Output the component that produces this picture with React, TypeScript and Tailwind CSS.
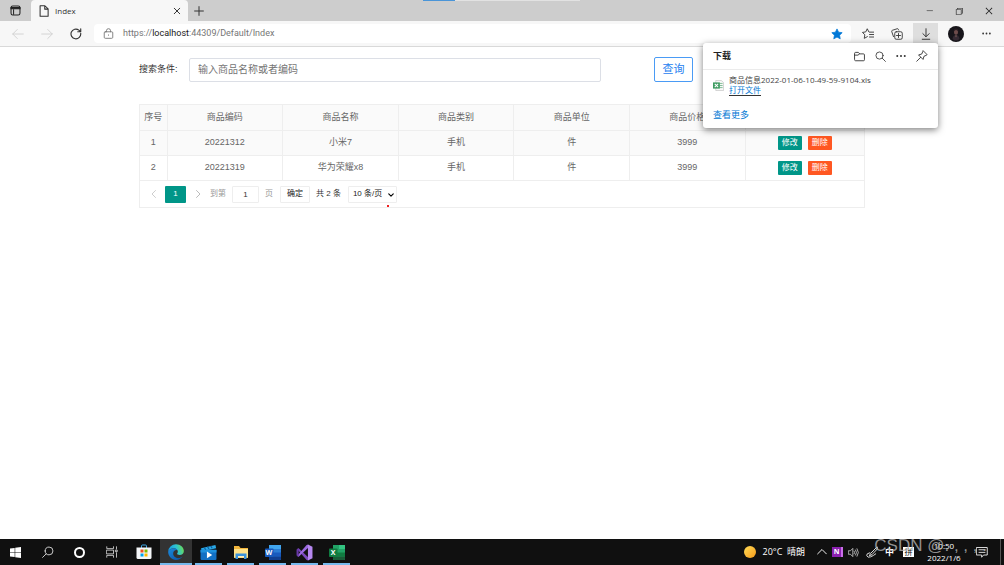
import React from "react";
import {
  VscChromeMinimize,
  VscChromeRestore,
  VscChromeClose,
} from "react-icons/vsc";

type IconProps = { className?: string };
type Product = { code: string; name: string; category: string; unit: string; price: string };

const products: Product[] = [
  { code: "20221312", name: "小米7", category: "手机", unit: "件", price: "3999" },
  { code: "20221319", name: "华为荣耀x8", category: "手机", unit: "件", price: "3999" },
];

const headings = ["序号", "商品编码", "商品名称", "商品类别", "商品单位", "商品价格", "操作"];

function Line({ className, children, box = "0 0 16 16", w = 1.2 }: IconProps & { children: React.ReactNode; box?: string; w?: number }) {
  return (
    <svg className={className} viewBox={box} fill="none" stroke="currentColor" strokeWidth={w} strokeLinecap="round" strokeLinejoin="round" aria-hidden="true">
      {children}
    </svg>
  );
}

const Dots = ({ className }: IconProps) => (
  <svg className={className} viewBox="0 0 16 16" fill="currentColor" aria-hidden="true">
    <circle cx="2" cy="8" r="1.6" />
    <circle cx="8" cy="8" r="1.6" />
    <circle cx="14" cy="8" r="1.6" />
  </svg>
);

const SearchIcon = ({ className }: IconProps) => (
  <Line className={className}>
    <circle cx="6.6" cy="6.6" r="5.2" />
    <path d="M10.500 10.500 15.200 15.200" />
  </Line>
);

function TabStrip() {
  return (
    <div className="relative flex h-[21px] bg-[#cdcdcd]">
      <button aria-label="标签页操作" className="flex w-[31px] items-center justify-center text-[#222]">
        <svg className="size-[11px]" viewBox="0 0 16 16" fill="none" stroke="currentColor" strokeWidth="1.5" aria-hidden="true">
          <rect x="1.5" y="1.5" width="13" height="13" rx="2.5" />
          <path d="M1.5 3.5h13v2h-13z" fill="currentColor" />
          <path d="M5.2 6v8" />
        </svg>
      </button>
      <div className="flex w-[157px] items-center rounded-t bg-[#f7f7f7] pr-[7px] pl-[7px]">
        <Line className="size-3 text-[#333]" w={1.4}>
          <path d="M2.8 1h6.4l4.3 4.3V15H2.8zM9 1v4.5h4.5" />
        </Line>
        <span className="ml-1 flex-1 pl-px text-[8px] text-[#333]">Index</span>
        <button aria-label="关闭标签页" className="text-[#222]">
          <Line className="size-2" w={1.8}>
            <path d="m2.5 2.5 11 11m0-11-11 11" />
          </Line>
        </button>
      </div>
      <button aria-label="新建标签页" className="flex w-[22px] items-center justify-center text-[#333]">
        <Line className="size-[10px]" w={1.6}>
          <path d="M8 1v14M1 8h14" />
        </Line>
      </button>
      <div className="absolute top-0 left-[42.1%] flex h-px w-[157px]">
        <span className="w-[32px] bg-[#4a95d8]" />
        <span className="flex-1 bg-[#e2e2e2]" />
      </div>
      <div className="ml-auto flex text-[#222]">
        <button aria-label="最小化" className="flex w-[30px] items-center justify-center"><VscChromeMinimize className="size-[9px]" /></button>
        <button aria-label="还原" className="flex w-[30px] items-center justify-center"><VscChromeRestore className="size-[10px]" /></button>
        <button aria-label="关闭" className="flex w-[30px] items-center justify-center"><VscChromeClose className="size-[10px]" /></button>
      </div>
    </div>
  );
}

function Toolbar() {
  return (
    <div className="flex h-[26px] items-center border-b border-[#d9d9d9] bg-[#f7f7f7] text-[#333]">
      <div className="flex w-[94px] items-center gap-[17px] pl-3">
        <button aria-label="后退" className="text-[#cfcfcf]"><Line className="size-3"><path d="M15 8H1m6-6L1 8l6 6" /></Line></button>
        <button aria-label="前进" className="text-[#cfcfcf]"><Line className="size-3"><path d="M1 8h14M9 2l6 6-6 6" /></Line></button>
        <button aria-label="刷新">
          <Line className="size-3" w={1.5}><path d="M14.3 7.2A6.5 6.5 0 1 1 11.8 2.8L14 4.6M14.3 1v4h-4" /></Line>
        </button>
      </div>
      <div className="flex h-[19px] flex-1 items-center rounded-sm bg-white px-2">
        <Line className="ml-px size-[11px] text-[#777]" w={1.3}>
          <rect x="1.8" y="5.5" width="12.4" height="9.5" rx="1.5" />
          <path d="M5 5.5V4a3 3 0 0 1 6 0v1.5M8 10v.6" />
        </Line>
        <a href="https://localhost:44309/Default/Index" className="ml-[9px] flex-1 font-['Roboto',sans-serif] text-[9px] text-[#767676]">
          https://<span className="text-[#1a1a1a]">localhost</span>:44309/Default/Index
        </a>
        <button aria-label="收藏此页" className="text-[#0078d7]">
          <svg className="size-3" viewBox="0 0 16 16" fill="currentColor" stroke="currentColor" strokeLinejoin="round" aria-hidden="true"><path d="m8 1.200 2.100 4.400 4.800.6-3.500 3.400.9 4.800L8 12.100l-4.300 2.300.9-4.800L1.100 6.200l4.800-.6z" /></svg>
        </button>
      </div>
      <div className="flex h-full items-center pl-0.5">
        <button aria-label="收藏夹" className="flex w-[29px] justify-center">
          <Line className="size-3" w={1.2}><path d="M9 5 7 1 5 5.200l-4.400.7L3.800 9 3 13.800l4.200-2.300M10 5.500h5.500M10 8.700h5.500M10 12h5.500" /></Line>
        </button>
        <button aria-label="集锦" className="flex w-[29px] justify-center">
          <Line className="size-3" w={1.2}>
            <rect x="5" y="5" width="10" height="10" rx="2" />
            <path d="M10 7.3v5.4M7.3 10h5.4M3.3 11.5 1 4.8Q.6 3.4 2 3L8.2 1Q9.5.6 10 2l.3.8" />
          </Line>
        </button>
        <button aria-label="下载" className="mt-0.5 ml-0.5 flex h-[21px] w-[25px] items-center justify-center self-start bg-[#dedede]">
          <Line className="size-3" w={1.3}><path d="M8 1v10.5M3.8 7.5 8 11.7l4.2-4.2M3 15h10" /></Line>
        </button>
        <button aria-label="个人资料" className="flex w-9 justify-center">
          <svg className="size-4" viewBox="0 0 32 32" aria-hidden="true">
            <circle cx="16" cy="16" r="16" fill="#17151a" />
            <ellipse cx="16" cy="12" rx="4" ry="5.5" fill="#6d4c4b" />
            <path d="M11 12q0-7 5-7t5 7q-2-4-5-4t-5 4" fill="#2a1f24" />
            <path d="M9 26q1-8 7-8t7 8l-4 3h-6z" fill="#352a33" />
            <path d="m14 19 2 4 2-4z" fill="#805d59" />
          </svg>
        </button>
        <button aria-label="设置及其他" className="flex w-6 justify-center"><Dots className="size-[9px]" /></button>
        <span className="w-1.5" />
      </div>
    </div>
  );
}

function DownloadsPanel() {
  return (
    <section aria-label="下载" className="absolute top-[43px] right-[66px] w-[235px] rounded-[3px] bg-white pb-[7px] text-[#333] shadow-[0_2px_7px_rgba(0,0,0,0.5)]">
      <header className="flex h-[27px] items-center border-b border-[#ebebeb] pr-[10px] pl-[10px]">
        <h2 className="flex-1 text-[9px] font-bold text-[#222]">下载</h2>
        <div className="flex items-center gap-[10px]">
          <button aria-label="打开下载文件夹">
            <Line className="size-[11px]" w={1.3}><path d="M.8 3.5q0-1.5 1.5-1.5h4l2 2.2h5.4q1.5 0 1.5 1.5v7q0 1.5-1.5 1.5H2.3q-1.5 0-1.5-1.5zM.8 6h5l2.3-1.8" /></Line>
          </button>
          <button aria-label="搜索下载"><SearchIcon className="size-[11px]" /></button>
          <button aria-label="更多选项"><Dots className="size-[10px]" /></button>
          <button aria-label="固定">
            <Line className="size-3" w={1.2}><path d="m9.8 1.2 5 5-1.5 1-2.7 1.2-1.2 4.2L3.4 6.6l4.2-1.2 1.2-2.7zM6.2 9.8 1 15" /></Line>
          </button>
        </div>
      </header>
      <div className="flex items-center px-[10px] pt-1">
        <svg className="size-[11px]" viewBox="0 0 16 16" aria-hidden="true">
          <path d="M4 .7h8l3.3 3v11.6H4z" fill="#f8f8f8" stroke="#b6b6b6" strokeWidth=".8" />
          <path d="M10 5h4M10 8h4M10 11h4" stroke="#77b98f" strokeWidth="1.3" />
          <path d="M0 3.5h10v9H0z" fill="#3d9b60" />
          <path d="m2.5 5.5 5 5m0-5-5 5" stroke="#fff" strokeWidth="1.5" />
        </svg>
        <div className="ml-[5px] flex flex-col items-start">
          <span className="text-[8px] leading-[11px] text-[#444]">商品信息2022-01-06-10-49-59-9104.xls</span>
          <a href="#open" className="border-b border-[#333] text-[8px] leading-[10px] text-[#0078d4]">打开文件</a>
        </div>
      </div>
      <a href="#more" className="mt-[13px] ml-[10px] block w-fit text-[9px] leading-3 text-[#0078d4]">查看更多</a>
    </section>
  );
}

function ProductTable() {
  return (
    <table className="mt-[22px] w-full table-fixed border-collapse text-center text-[9px] text-[#666]">
      <colgroup>
        <col className="w-[3.8%]" />
        <col className="w-[15.95%]" />
        <col className="w-[15.95%]" />
        <col className="w-[15.95%]" />
        <col className="w-[15.95%]" />
        <col className="w-[15.95%]" />
        <col />
      </colgroup>
      <thead>
        <tr className="h-[26px] bg-[#fafafa]">
          {headings.map((h) => (
            <th key={h} scope="col" className="border border-[#eeeeee] font-normal">{h}</th>
          ))}
        </tr>
      </thead>
      <tbody>
        {products.map((p, i) => (
          <tr key={p.code} className="h-[25px] odd:bg-[#fafafa]">
            {[String(i + 1), p.code, p.name, p.category, p.unit, p.price].map((v, c) => (
              <td key={c} className="border border-[#eeeeee]">{v}</td>
            ))}
            <td className="border border-[#eeeeee]">
              <div className="flex justify-center gap-1.5 text-[8px] text-white">
                <button className="h-[14px] w-6 rounded-[1px] bg-[#009688]">修改</button>
                <button className="h-[14px] w-6 rounded-[1px] bg-[#ff5722]">删除</button>
              </div>
            </td>
          </tr>
        ))}
      </tbody>
    </table>
  );
}

function Pager() {
  return (
    <nav aria-label="分页" className="flex h-[27px] items-center border border-t-0 border-[#eeeeee] text-[8px] text-[#333]">
      <button aria-label="上一页" className="flex w-[25px] justify-center pl-0.5 text-[#c2c2c2]"><Line className="size-2" w={1.6}><path d="M11 1 4 8l7 7" /></Line></button>
      <button aria-current="page" className="h-[17px] w-[21px] rounded-[1px] bg-[#009688] text-white">1</button>
      <button aria-label="下一页" className="flex w-6 justify-center text-[#aaa]"><Line className="size-2" w={1.6}><path d="m5 1 7 7-7 7" /></Line></button>
      <label htmlFor="page" className="text-[#999]">到第</label>
      <input id="page" defaultValue="1" className="mx-1.5 h-[17px] w-[27px] rounded-[1px] border border-[#eeeeee] text-center" />
      <span className="text-[#999]">页</span>
      <button className="ml-[7px] h-[17px] w-[30px] rounded-[1px] border border-[#eeeeee] text-[#222]">确定</button>
      <span className="ml-1.5">共 2 条</span>
      <div className="relative ml-[7px]">
        <select aria-label="每页条数" defaultValue="10" className="h-[17px] w-[49px] appearance-none rounded-[1px] border border-[#eeeeee] bg-white pl-1 text-[8px] text-[#222]">
          <option value="10">10 条/页</option>
          <option value="20">20 条/页</option>
        </select>
        <Line className="pointer-events-none absolute top-1.5 right-[3px] size-1.5 text-black" w={3}><path d="m2 5 6 6 6-6" /></Line>
        <span className="absolute right-2 -bottom-1 size-0.5 bg-[#f02020]" />
      </div>
    </nav>
  );
}

const Windows = () => (
  <svg className="size-[11px]" viewBox="0 0 16 16" fill="#fff" aria-hidden="true"><path d="M0 2.3 6.8 1.3v6.3H0zM7.6 1.2 16 0v7.6H7.6zM0 8.4h6.8v6.3L0 13.7zM7.6 8.4H16V16l-8.4-1.2z" /></svg>
);
const TaskView = () => (
  <Line className="size-3 text-[#ddd]" w={1.1}>
    <path d="M1 1v2.5h9V1M1 15v-2.5h9V15M1 5.5h9v5H1zM14 1v3M14 9v6M13 5.5h2v2h-2z" />
  </Line>
);
const Store = () => (
  <svg className="size-4" viewBox="0 0 32 32" aria-hidden="true">
    <path d="M11 8V4q0-2 2-2h6q2 0 2 2v4" fill="none" stroke="#3fa9e8" strokeWidth="2" />
    <path d="M1 7h30v20q0 3-3 3H4q-3 0-3-3z" fill="#f4f6f8" />
    <path d="M9 11h6v6H9z" fill="#f25022" /><path d="M17 11h6v6h-6z" fill="#7fba00" />
    <path d="M9 19h6v6H9z" fill="#00a4ef" /><path d="M17 19h6v6h-6z" fill="#ffb900" />
  </svg>
);
const Edge = () => (
  <svg className="size-4" viewBox="0 0 32 32" aria-hidden="true">
    <defs>
      <linearGradient id="edgeTop" x1="0" y1=".6" x2="1" y2=".4"><stop offset="0" stopColor="#1693e0" /><stop offset=".55" stopColor="#2cc3d3" /><stop offset="1" stopColor="#6bdc55" /></linearGradient>
      <linearGradient id="edgeLow" x1="0" y1="0" x2="1" y2="1"><stop offset="0" stopColor="#1b8bdd" /><stop offset="1" stopColor="#0a4fa3" /></linearGradient>
    </defs>
    <path d="M.4 15A15.7 15.7 0 0 1 16 .3C25 .3 31.700 6.500 31.700 13.800c0 5-3.900 8-8.200 8-3.600 0-5.300-1.300-5.300-2.400 0-.8 1.500-1.500 1.500-4.200 0-3.800-3.600-6.700-8.200-6.700C6.500 8.500 2.400 11 .4 15" fill="url(#edgeTop)" />
    <path d="M.4 15C2.400 11 6.500 8.500 11.500 8.500c3.500 0 6.200 1.500 7.500 4-4.200-1.600-8.700 1.500-8.700 6.700 0 6 5.700 9.700 11.500 9 2.500-.3 5.200-1.500 7.500-3.700C26.500 29.200 21.600 31.800 16 31.800 7 31.800-.2 24 .4 15" fill="url(#edgeLow)" />
  </svg>
);
const Movies = () => (
  <svg className="size-[17px]" viewBox="0 0 32 32" aria-hidden="true">
    <path d="m2 8 27-6 1.500 6L3 14z" fill="#2aa9e8" /><path d="m8 6.500 3 4.500m3-6 3 4.500m3-6 3 4.500" stroke="#0c5a99" strokeWidth="2" />
    <path d="M1 11h30v17q0 2-2 2H3q-2 0-2-2z" fill="#1270c4" /><path d="M1 11h30v5H1z" fill="#1e91dd" /><path d="M13 14v13l10-6.500z" fill="#fff" />
  </svg>
);
const Folder = () => (
  <svg className="size-4" viewBox="0 0 32 32" aria-hidden="true">
    <path d="M2 4h10l3 4h15v20H2z" fill="#f2b63c" /><path d="M2 10h28v17H2z" fill="#ffe28a" />
    <path d="M5 19h22v11h-5v-6H10v6H5z" fill="#3b93dc" /><path d="M10 24h12v3H10z" fill="#fff1bd" />
  </svg>
);
const VisualStudio = () => (
  <svg className="size-[17px]" viewBox="0 0 32 32" aria-hidden="true">
    <path d="M2 9.500 5 8l18 17v6L20 30z" fill="#7a48bd" /><path d="M2 22.500 5 24 23 7V1l-3 1z" fill="#9b6ae0" />
    <path d="M1 10.500 5 8v16l-4-2.500z" fill="#6737a6" /><path d="m22.500 1 8.500 4v22l-8.500 4z" fill="#b688f0" />
  </svg>
);
function Office({ letter, word }: { letter: string; word?: boolean }) {
  return (
    <span className="relative block h-[15px] w-4" aria-hidden="true">
      <svg className="size-full" viewBox="0 0 32 30">
        <rect x="8" width="24" height="30" rx="2" fill={word ? "#2b7cd3" : "#21a366"} />
        <path d="M8 0h12v8H8z" fill={word ? "#41a5ee" : "#21a366"} />
        <path d="M20 0h12v8H20z" fill={word ? "#41a5ee" : "#33c481"} />
        <path d="M8 15h24v8H8z" fill={word ? "#185abd" : "#107c41"} />
        <path d="M8 23h24v5q0 2-2 2H10q-2 0-2-2z" fill={word ? "#103f91" : "#185c37"} />
        <rect y="7" width="17" height="17" rx="1.500" fill={word ? "#185abd" : "#107c41"} />
      </svg>
      <span className="absolute top-[3px] left-0 w-[9px] text-center text-[7px] leading-[9px] font-bold text-white">{letter}</span>
    </span>
  );
}

const systemButtons = [
  { name: "开始", icon: <Windows /> },
  { name: "搜索", icon: <span className="block -scale-x-100"><SearchIcon className="size-3 text-[#ddd]" /></span> },
  { name: "Cortana", icon: <span className="block size-[11px] rounded-full border-2 border-white" /> },
  { name: "任务视图", icon: <TaskView /> },
];

const apps = [
  { name: "Microsoft Store", icon: <Store /> },
  { name: "Edge", icon: <Edge />, running: true, active: true },
  { name: "电影和电视", icon: <Movies />, running: true },
  { name: "文件资源管理器", icon: <Folder />, running: true },
  { name: "Word", icon: <Office letter="W" word />, running: true },
  { name: "Visual Studio", icon: <VisualStudio />, running: true },
  { name: "Excel", icon: <Office letter="X" />, running: true },
];

function Taskbar() {
  return (
    <footer className="relative flex h-[26px] items-stretch bg-[#101010] text-white">
      <div className="flex gap-px">
        {systemButtons.map((b) => (
          <button key={b.name} aria-label={b.name} className="flex w-[31px] items-center justify-center">{b.icon}</button>
        ))}
      </div>
      <div className="ml-[3px] flex gap-[5px]">
        {apps.map((a) => (
          <button
            key={a.name}
            aria-label={a.name}
            className={
              a.active
                ? "-mx-0.5 flex w-[32px] items-center justify-center border-b-2 border-[#76b9ed] bg-[#333] pt-0.5"
                : a.running
                ? "flex w-[27px] items-center justify-center border-b-2 border-[#76b9ed] pt-0.5"
                : "flex w-[27px] items-center justify-center"
            }
          >
            {a.icon}
          </button>
        ))}
      </div>
      <div className="ml-auto flex items-center">
        <button className="mr-3 flex items-center text-[9px]">
          <span className="mr-1.5 size-3 rounded-full bg-linear-to-br from-[#ffdc54] to-[#f49a12]" />
          20°C&nbsp; 晴朗
        </button>
        <div className="flex items-center gap-[5px]">
          <button aria-label="显示隐藏的图标"><Line className="size-[10px]" w={1.5}><path d="m1 11 7-7 7 7" /></Line></button>
          <button aria-label="OneNote" className="block h-[10px] w-[11px] border-r-2 border-[#c96fe8] bg-[#8b20b0] text-center text-[7px] leading-[10px] font-bold">N</button>
          <button aria-label="音量">
            <Line className="size-[11px] text-[#ccc]" w={1.2}><path d="M1 5.500h2.500L7 2v12L3.500 10.500H1zM9 6q1.500 2 0 4M11 4.200q3 3.800 0 7.600M13.200 2.500q4 5.500 0 11" /></Line>
          </button>
          <button aria-label="手写笔" className="ml-0.5">
            <Line className="size-3 text-[#ddd]" w={1.3}><path d="M14.500 1.500 6 10l-1.500 3L8 11.500 15 4zM5 9Q0 10 1 13t5 1.500 7-4" /></Line>
          </button>
          <button className="ml-0.5 text-[9px] font-bold">中</button>
          <button className="ml-1 h-[10px] w-[11px] bg-white text-[8px] leading-[10px] text-[#111]">拼</button>
        </div>
        <time className="ml-2.5 w-10 text-center text-[8px] leading-[12px]">10:50<br />2022/1/6</time>
        <button aria-label="通知" className="ml-3">
          <Line className="size-3 text-[#ddd]" w={1.3}><path d="M1 2h14v10H10l-2.500 3V12H1zM4 5h8M4 8.500h8" /></Line>
        </button>
        <span className="ml-3 h-full w-1 border-l border-[#555]" />
      </div>
      <span className="pointer-events-none absolute -top-[3px] right-[17px] font-['Liberation_Sans'] text-[17px] leading-5 whitespace-nowrap text-[#b4b4b4]/80">CSDN @. , , , .</span>
    </footer>
  );
}

export default function App() {
  return (
    <div className="relative flex min-h-screen flex-col overflow-hidden bg-white font-['Open_Sans','Noto_Sans_CJK_SC',sans-serif]">
      <TabStrip />
      <Toolbar />
      <main className="mx-auto w-full max-w-[726px] flex-1 font-['Liberation_Sans','Noto_Sans_CJK_SC',sans-serif]">
        <form className="flex items-center pt-[10px]" onSubmit={(e) => e.preventDefault()}>
          <label htmlFor="keyword" className="w-[50px] text-[9px] text-[#333]">搜索条件:</label>
          <input id="keyword" placeholder="输入商品名称或者编码" className="h-6 w-[412px] rounded-[2px] border border-[#dcdfe6] px-2 text-[10px] text-[#555] placeholder:text-[#757575]" />
          <button className="ml-[53px] h-[25px] w-[39px] rounded-[2px] border border-[#4a9bf5] text-[11px] text-[#1e80f0]">查询</button>
        </form>
        <ProductTable />
        <Pager />
      </main>
      <Taskbar />
      <DownloadsPanel />
    </div>
  );
}
